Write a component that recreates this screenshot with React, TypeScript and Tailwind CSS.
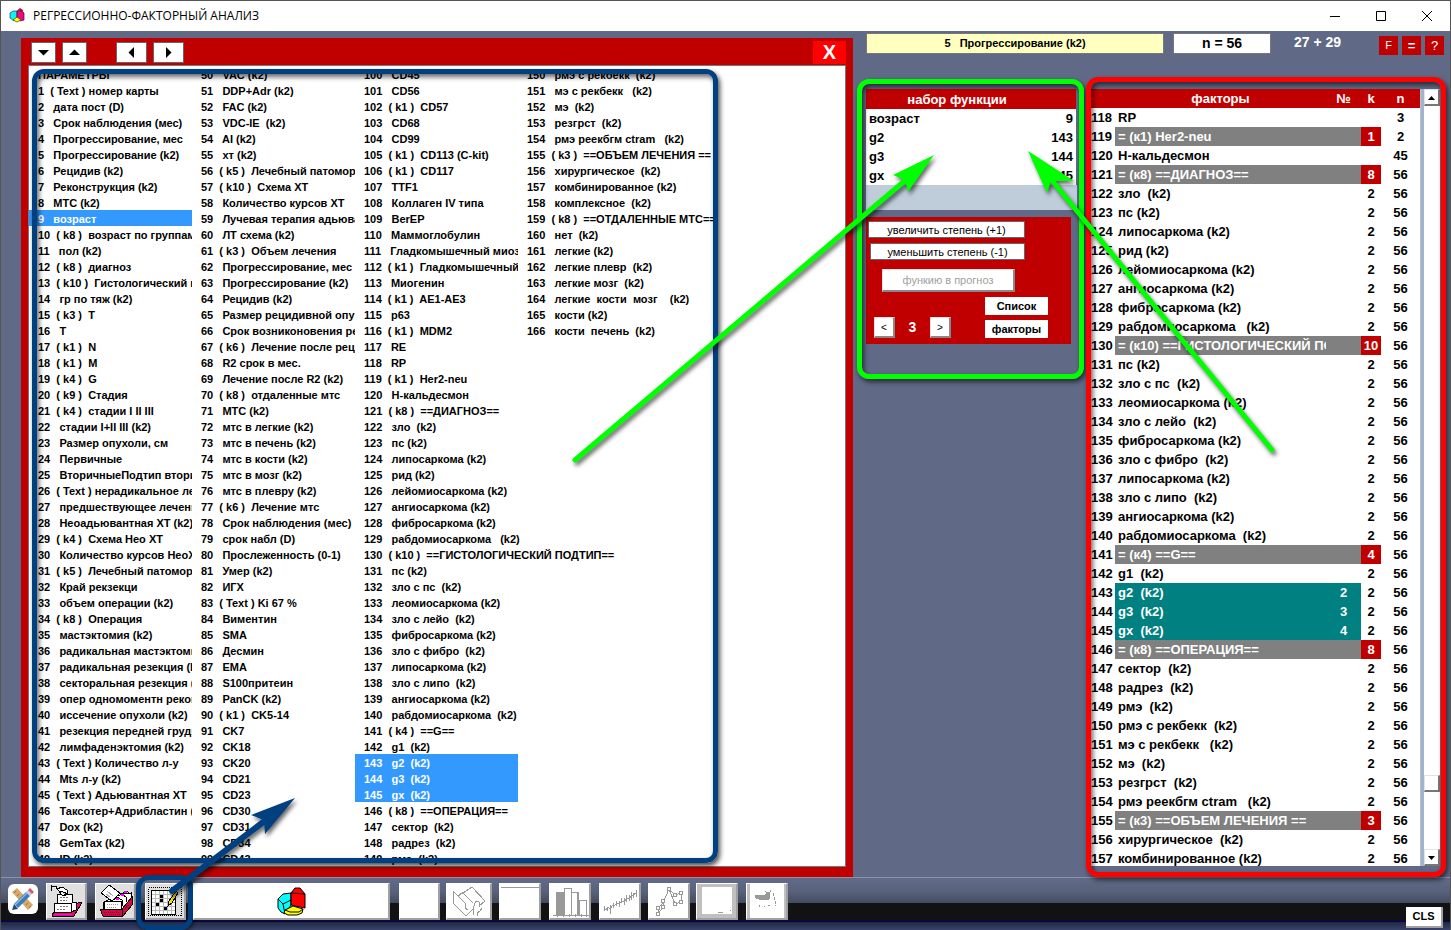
import React from "react";

const PARAMETERS: string[] = [
  "ПАРАМЕТРЫ",
  "( Text ) номер карты", "дата пост (D)", "Срок наблюдения (мес)", "Прогрессирование, мес", "Прогрессирование (k2)",
  "Рецидив (k2)", "Реконструкция (k2)", "МТС (k2)", "возраст", "( k8 )  возраст по группам",
  "пол (k2)", "( k8 )  диагноз", "( k10 )  Гистологический п", "гр по тяж (k2)", "( k3 )  T",
  "T", "( k1 )  N", "( k1 )  M", "( k4 )  G", "( k9 )  Стадия",
  "( k4 )  стадии I II III", "стадии I+II III (k2)", "Размер опухоли, см", "Первичные", "ВторичныеПодтип втори",
  "( Text ) нерадикальное ле", "предшествующее лечени", "Неоадьювантная ХТ (k2)", "( k4 )  Схема Нео ХТ", "Количество курсов НеоХ",
  "( k5 )  Лечебный патомор", "Край рекзекци", "объем операции (k2)", "( k8 )  Операция", "мастэктомия (k2)",
  "радикальная мастэктоми", "радикальная резекция (k", "секторальная резекция (", "опер одномоментн рекон", "иссечение опухоли (k2)",
  "резекция передней грудн", "лимфаденэктомия (k2)", "( Text ) Количество л-у", "Mts л-у (k2)", "( Text ) Адьювантная ХТ",
  "Таксотер+Адрибластин (", "Dox (k2)", "GemTax (k2)", "ID (k2)", "VAC (k2)",
  "DDP+Adr (k2)", "FAC (k2)", "VDC-IE  (k2)", "AI (k2)", "хт (k2)",
  "( k5 )  Лечебный патомор", "( k10 )  Схема ХТ", "Количество курсов ХТ", "Лучевая терапия адьюва", "ЛТ схема (k2)",
  "( k3 )  Объем лечения", "Прогрессирование, мес", "Прогрессирование (k2)", "Рецидив (k2)", "Размер рецидивной опу",
  "Срок возниконовения ре", "( k6 )  Лечение после рец", "R2 срок в мес.", "Лечение после R2 (k2)", "( k8 )  отдаленные мтс",
  "МТС (k2)", "мтс в легкие (k2)", "мтс в печень (k2)", "мтс в кости (k2)", "мтс в мозг (k2)",
  "мтс в плевру (k2)", "( k6 )  Лечение мтс", "Срок наблюдения (мес)", "срок набл (D)", "Прослеженность (0-1)",
  "Умер (k2)", "ИГХ", "( Text ) Ki 67 %", "Виментин", "SMA",
  "Десмин", "EMA", "S100притеин", "PanCK (k2)", "( k1 )  CK5-14",
  "CK7", "CK18", "CK20", "CD21", "CD23",
  "CD30", "CD31", "CD34", "CD43", "CD45",
  "CD56", "( k1 )  CD57", "CD68", "CD99", "( k1 )  CD113 (C-kit)",
  "( k1 )  CD117", "TTF1", "Коллаген IV типа", "BerEP", "Маммоглобулин",
  "Гладкомышечный миоз", "( k1 )  Гладкомышечный", "Миогенин", "( k1 )  AE1-AE3", "p63",
  "( k1 )  MDM2", "RE", "RP", "( k1 )  Her2-neu", "Н-кальдесмон",
  "( k8 )  ==ДИАГНОЗ==", "зло  (k2)", "пс (k2)", "липосаркома (k2)", "рид (k2)",
  "лейомиосаркома (k2)", "ангиосаркома (k2)", "фибросаркома (k2)", "рабдомиосаркома   (k2)", "( k10 )  ==ГИСТОЛОГИЧЕСКИЙ ПОДТИП==",
  "пс (k2)", "зло с пс  (k2)", "леомиосаркома (k2)", "зло с лейо  (k2)", "фибросаркома (k2)",
  "зло с фибро  (k2)", "липосаркома (k2)", "зло с липо  (k2)", "ангиосаркома (k2)", "рабдомиосаркома  (k2)",
  "( k4 )  ==G==", "g1  (k2)", "g2  (k2)", "g3  (k2)", "gx  (k2)",
  "( k8 )  ==ОПЕРАЦИЯ==", "сектор  (k2)", "радрез  (k2)", "рмэ  (k2)", "рмэ с рекбекк  (k2)",
  "мэ с рекбекк   (k2)", "мэ  (k2)", "резгрст  (k2)", "рмэ реекбгм ctram   (k2)", "( k3 )  ==ОБЪЕМ ЛЕЧЕНИЯ ==",
  "хирургическое  (k2)", "комбинированное (k2)", "комплексное  (k2)", "( k8 )  ==ОТДАЛЕННЫЕ МТС==", "нет  (k2)",
  "легкие (k2)", "легкие плевр  (k2)", "легкие мозг  (k2)", "легкие  кости  мозг    (k2)", "кости (k2)",
  "кости  печень  (k2)",
];

const SELECTED = [9, 143, 144, 145];

type Factor = { id: number; name: string; k?: string; n: string; group?: boolean; pick?: string };

const FACTORS: Factor[] = [
  { id: 118, name: "RP", n: "3" },
  { id: 119, name: "= (к1) Her2-neu", k: "1", n: "2", group: true },
  { id: 120, name: "Н-кальдесмон", n: "45" },
  { id: 121, name: "= (к8) ==ДИАГНОЗ==", k: "8", n: "56", group: true },
  { id: 122, name: "зло  (k2)", k: "2", n: "56" },
  { id: 123, name: "пс (k2)", k: "2", n: "56" },
  { id: 124, name: "липосаркома (k2)", k: "2", n: "56" },
  { id: 125, name: "рид (k2)", k: "2", n: "56" },
  { id: 126, name: "лейомиосаркома (k2)", k: "2", n: "56" },
  { id: 127, name: "ангиосаркома (k2)", k: "2", n: "56" },
  { id: 128, name: "фибросаркома (k2)", k: "2", n: "56" },
  { id: 129, name: "рабдомиосаркома   (k2)", k: "2", n: "56" },
  { id: 130, name: "= (к10) ==ГИСТОЛОГИЧЕСКИЙ ПО", k: "10", n: "56", group: true },
  { id: 131, name: "пс (k2)", k: "2", n: "56" },
  { id: 132, name: "зло с пс  (k2)", k: "2", n: "56" },
  { id: 133, name: "леомиосаркома (k2)", k: "2", n: "56" },
  { id: 134, name: "зло с лейо  (k2)", k: "2", n: "56" },
  { id: 135, name: "фибросаркома (k2)", k: "2", n: "56" },
  { id: 136, name: "зло с фибро  (k2)", k: "2", n: "56" },
  { id: 137, name: "липосаркома (k2)", k: "2", n: "56" },
  { id: 138, name: "зло с липо  (k2)", k: "2", n: "56" },
  { id: 139, name: "ангиосаркома (k2)", k: "2", n: "56" },
  { id: 140, name: "рабдомиосаркома  (k2)", k: "2", n: "56" },
  { id: 141, name: "= (к4) ==G==", k: "4", n: "56", group: true },
  { id: 142, name: "g1  (k2)", k: "2", n: "56" },
  { id: 143, name: "g2  (k2)", k: "2", n: "56", pick: "2" },
  { id: 144, name: "g3  (k2)", k: "2", n: "56", pick: "3" },
  { id: 145, name: "gx  (k2)", k: "2", n: "56", pick: "4" },
  { id: 146, name: "= (к8) ==ОПЕРАЦИЯ==", k: "8", n: "56", group: true },
  { id: 147, name: "сектор  (k2)", k: "2", n: "56" },
  { id: 148, name: "радрез  (k2)", k: "2", n: "56" },
  { id: 149, name: "рмэ  (k2)", k: "2", n: "56" },
  { id: 150, name: "рмэ с рекбекк  (k2)", k: "2", n: "56" },
  { id: 151, name: "мэ с рекбекк   (k2)", k: "2", n: "56" },
  { id: 152, name: "мэ  (k2)", k: "2", n: "56" },
  { id: 153, name: "резгрст  (k2)", k: "2", n: "56" },
  { id: 154, name: "рмэ реекбгм ctram   (k2)", k: "2", n: "56" },
  { id: 155, name: "= (к3) ==ОБЪЕМ ЛЕЧЕНИЯ ==", k: "3", n: "56", group: true },
  { id: 156, name: "хирургическое  (k2)", k: "2", n: "56" },
  { id: 157, name: "комбинированное (k2)", k: "2", n: "56" },
];

const FUNCTION_SET = [
  ["возраст", "9"],
  ["g2", "143"],
  ["g3", "144"],
  ["gx", "145"],
];

function parameterText(index: number) {
  const name = PARAMETERS[index];
  if (index === 0) return name;
  return `${index}${name.startsWith("(") ? "  " : "   "}${name}`;
}

function Triangle({ d }: { d: string }) {
  return (
    <svg width="11" height="11" viewBox="0 0 11 11" aria-hidden="true">
      <path d={d} fill="#000" />
    </svg>
  );
}
const DOWN = "M0 3H11L5.5 8.500Z";
const UP = "M0 8H11L5.500 2.500Z";
const LEFT = "M8 0V11L2.500 5.500Z";
const RIGHT = "M3 0V11L8.500 5.500Z";

function Pie({ className }: { className: string }) {
  return (
    <svg className={className} viewBox="0 0 30 30" stroke="#000" strokeWidth="1" aria-hidden="true">
      <path d="M1 12 6 7 14 6V18L8 27 4 25 1 21Z" fill="#0ff" />
      <path d="M1 12 6 17 14 13M6 17 8 27" fill="none" />
      <path d="M14 6 18 1 23 1 28 7V21L23 20 14 18Z" fill="#f00" />
      <path d="M14 6 28 7" fill="none" />
      <path d="M8 23 16 19 26 22 25 26 20 28H11L7 26Z" fill="#ff0" />
      <path d="M8 23 13 25H22L26 22" fill="none" />
    </svg>
  );
}

function WindowLogo() {
  return (
    <svg width="16" height="16" viewBox="0 0 16 16" aria-hidden="true">
      <path d="M1 5 4 3 8 3V10L5 13 1 10Z" fill="#0cf3f7" stroke="#145" strokeWidth=".7" />
      <path d="M8 3 11 1 15 5V12L11 13 8 10Z" fill="#f0087c" stroke="#403" strokeWidth=".7" />
      <path d="M9 2 11 0 14 2V4L11 4Z" fill="#a51b35" />
      <path d="M4 12 8 9 12 12 8 14Z" fill="#ff0" stroke="#442" strokeWidth=".7" />
    </svg>
  );
}

function ParameterPanel() {
  const columns = [0, 50, 100, 150];
  const arrow = "flex h-[21px] items-center justify-center border border-[#666] bg-white";
  return (
    <section aria-label="Параметры" className="mt-[7px] ml-5 flex min-w-0 flex-1 flex-col bg-[#c00000] px-[7px] pb-[10px]">
      <div className="flex h-[27px] items-center pt-[1px] pl-[3px]">
        <button aria-label="Вниз" className={`${arrow} w-[25px]`}><Triangle d={DOWN} /></button>
        <button aria-label="Вверх" className={`${arrow} ml-[6px] w-[25px]`}><Triangle d={UP} /></button>
        <button aria-label="Влево" className={`${arrow} ml-[29px] w-[31px]`}><Triangle d={LEFT} /></button>
        <button aria-label="Вправо" className={`${arrow} ml-[6px] w-[31px]`}><Triangle d={RIGHT} /></button>
        <button className="ml-auto h-[23px] w-[33px] bg-[#ff0000] text-[20px] leading-[23px] font-bold text-white">X</button>
      </div>
      <div className="relative min-h-0 flex-1 border border-[#777] bg-white">
        <div className="flex h-full overflow-hidden text-[11px] leading-[18px] font-bold whitespace-pre text-black">
          {columns.map((start) => (
            <ul key={start} className={start === 150 ? "flex-1" : "w-[163px] shrink-0"}>
              {PARAMETERS.slice(start, start + 50).map((_, i) => {
                const index = start + i;
                const clipped = index + 50 < PARAMETERS.length;
                return (
                  <li
                    key={index}
                    className={`h-4 pl-[9px] ${clipped ? "overflow-hidden" : ""} ${SELECTED.includes(index) ? "bg-[#3399ff] text-white" : ""}`}
                  >
                    {parameterText(index)}
                  </li>
                );
              })}
            </ul>
          ))}
        </div>
        <div className="pointer-events-none absolute top-[3px] bottom-[3px] left-[3px] w-[686px] rounded-[12px] border-[5px] border-[#004080] shadow-[2px_3px_5px_rgba(0,0,0,0.7),inset_2px_3px_5px_rgba(0,0,0,0.6)]" />
      </div>
    </section>
  );
}

function StatusRow() {
  const small = "mt-[3px] h-[19px] w-[19px] bg-[#c00000] leading-[17px] text-white";
  return (
    <div className="flex h-[58px] items-start pt-[2px] pr-[6px] pl-[13px] font-bold">
      <div className="h-[21px] w-[298px] border border-[#777] bg-[#ffffc0] text-center text-[11px] leading-[19px] whitespace-pre text-black">5   Прогрессирование (k2)</div>
      <div className="ml-[9px] h-[21px] w-[98px] border border-[#777] bg-white text-center text-[14px] leading-[18px] text-black">n = 56</div>
      <div className="ml-[23px] text-[14px] leading-[18px] text-white">27 + 29</div>
      <div className="ml-auto flex gap-[4px]">
        <button className={`${small} text-[11px] font-normal`}>F</button>
        <button className={`${small} text-[13px] font-bold`}>=</button>
        <button className={`${small} text-[13px] font-normal`}>?</button>
      </div>
    </div>
  );
}

function FunctionPanel() {
  const wide = "block h-[17px] border border-[#666] bg-white text-center text-[11px] leading-[14px] text-black";
  const raised = "border-t border-r-2 border-b-2 border-l border-t-[#e3e3e3] border-r-[#888] border-b-[#888] border-l-[#e3e3e3] bg-white";
  const step = `${raised} h-[21px] w-[21px] text-[10px] leading-[17px] text-black`;
  const plain = "h-[18px] w-[63px] bg-white text-[11px] leading-[16px] font-bold text-black";
  return (
    <section className="relative h-[286px] w-[212px] shrink-0">
      <table className="w-[210px] table-fixed border-collapse bg-white text-[13px] leading-[19px] font-bold text-black">
        <thead>
          <tr className="h-5 bg-[#c00000] text-white">
            <th colSpan={2} className="p-0 pr-[28px]">набор функции</th>
          </tr>
        </thead>
        <tbody>
          {FUNCTION_SET.map(([name, id]) => (
            <tr key={name} className="h-[19px]">
              <td className="p-0 pl-[3px]">{name}</td>
              <td className="p-0 pr-[3px] text-right">{id}</td>
            </tr>
          ))}
        </tbody>
      </table>
      <div className="h-[25px] w-[211px] bg-[#bfcddb]" />
      <div className="mt-[7px] h-[127px] w-[205px] bg-[#c00000] pt-1 pl-[2px]">
        <button className={`${wide} w-[157px]`}>увеличить степень (+1)</button>
        <button className={`${wide} mt-[5px] ml-[2px] w-[155px]`}>уменьшить степень (-1)</button>
        <button disabled className={`${raised} mt-[9px] ml-[14px] block h-[23px] w-[133px] text-[11px] leading-[19px] text-[#a0a0a0]`}>функию в прогноз</button>
        <div className="mt-[5px] flex items-end pl-[6px]">
          <button aria-label="Предыдущая" className={step}>&lt;</button>
          <span className="w-[35px] text-center text-[14px] leading-[22px] font-bold text-white">3</span>
          <button aria-label="Следующая" className={step}>&gt;</button>
          <div className="ml-[34px] flex flex-col gap-[5px]">
            <button className={plain}>Список</button>
            <button className={plain}>факторы</button>
          </div>
        </div>
      </div>
      <div className="pointer-events-none absolute -top-[10px] -left-[9px] h-[300px] w-[227px] rounded-[12px] border-[5px] border-[#00ff00] shadow-[2px_3px_5px_rgba(0,0,0,0.6),inset_2px_3px_5px_rgba(0,0,0,0.6)]" />
    </section>
  );
}

function FactorPanel() {
  const bar = "h-[17px] w-4 border-t border-r-2 border-b-2 border-l border-t-[#e3e3e3] border-r-[#777] border-b-[#777] border-l-[#e3e3e3] bg-white flex items-center justify-center";
  return (
    <section className="relative mr-[10px] min-w-0 flex-1">
      <div className="flex h-full overflow-hidden bg-white">
        <div className="min-w-0 flex-1">
          <table className="w-full table-fixed border-collapse text-[13px] leading-[19px] font-bold text-black">
            <colgroup>
              <col className="w-6" />
              <col />
              <col className="w-[35px]" />
              <col className="w-5" />
              <col className="w-[39px]" />
            </colgroup>
            <thead>
              <tr className="h-[19px] bg-[#c00000] text-white">
                <th className="p-0" />
                <th className="p-0">факторы</th>
                <th className="p-0">№</th>
                <th className="p-0">k</th>
                <th className="p-0">n</th>
              </tr>
            </thead>
            <tbody>
              {FACTORS.map((f) => {
                const tone = f.group ? "bg-[#808080] text-white" : f.pick ? "bg-[#008080] text-white" : "";
                return (
                  <tr key={f.id} className="h-[19px]">
                    <td className="p-0">{f.id}</td>
                    <td className={`overflow-hidden p-0 pl-[3px] whitespace-pre ${tone}`}>{f.name}</td>
                    <td className={`p-0 text-center ${tone}`}>{f.pick}</td>
                    <td className={`p-0 text-center ${f.group ? "bg-[#c00000] text-white" : ""}`}>{f.k}</td>
                    <td className="p-0 text-center">{f.n}</td>
                  </tr>
                );
              })}
            </tbody>
          </table>
        </div>
        <div className="w-[4px] border-l border-[#c0c0c0] bg-[#9fb4d0]" />
        <div className="flex w-4 flex-col">
          <button aria-label="Прокрутить вверх" className={bar}><Triangle d="M2 8H9L5.500 4Z" /></button>
          <div className="flex-1" />
          <div className={bar} />
          <div className="h-[57px]" />
          <button aria-label="Прокрутить вниз" className={bar}><Triangle d="M2 4H9L5.500 8Z" /></button>
        </div>
      </div>
      <div className="pointer-events-none absolute -top-[12px] -right-[6px] -bottom-[11px] -left-[5px] rounded-[12px] border-[5px] border-[#ff0000] shadow-[2px_3px_5px_rgba(0,0,0,0.6),inset_2px_3px_5px_rgba(0,0,0,0.6)]" />
    </section>
  );
}

function Icon({ children, w = 41 }: { children?: React.ReactNode; w?: number }) {
  return (
    <svg width={w} height="37" viewBox={`0 0 ${w} 37`} shapeRendering="crispEdges" fill="none" stroke="#999" strokeWidth="1" aria-hidden="true">
      {children}
    </svg>
  );
}

function Tool({ label, className, children }: { label: string; className: string; children: React.ReactNode }) {
  return (
    <button aria-label={label} className={`relative h-[37px] shrink-0 ${className}`}>
      <span className="block h-full overflow-hidden">{children}</span>
      <span className="pointer-events-none absolute inset-0 border-t border-r-2 border-b-2 border-l border-t-white border-r-[#a0a0a0] border-b-[#a0a0a0] border-l-white" />
    </button>
  );
}

function BottomBar() {
  return (
    <footer className="flex h-[53px] shrink-0 items-start border-t border-[#8b93ac] bg-[linear-gradient(to_bottom,#616b88_0px,#58617a_14px,#434b5f_25px,#121214_25px,#121214_42px,#08083c_42px,#08083c_44px,#202844_44px,#39446c_52px)] pt-[5px] pr-[7px] pl-[7px]">
      <button aria-label="Правка" className="mt-[1px] h-[30px] w-[30px] rounded-[6px] bg-white">
        <svg width="30" height="30" viewBox="0 0 30 30" aria-hidden="true">
          <path d="M4 8 9 4 25 21 20 26Z" fill="#d9a866" />
          <path d="M6 9l2-2M9 12l2-2M18 21l2-2M21 24l2-2" stroke="#a37338" strokeWidth="1" />
          <path d="M4 26 6 20 10 25Z" fill="#224b78" />
          <path d="M6 20 18 8 22 12 10 24Z" fill="#3a7cbc" />
          <path d="M7 21 19 9" stroke="#83b7e4" strokeWidth="1.500" />
          <path d="M18 8 20 6 24 10 22 12Z" fill="#c9ced6" />
          <path d="M20 6 22 4 26 8 24 10Z" fill="#d5566d" />
        </svg>
      </button>
      <Tool label="Карточка" className="ml-2 w-[41px] bg-[#e0e0e0]">
        <Icon>
          <g stroke="#000">
            <path d="M6 31 9 29H25L33 19H35V21L28 33H6Z" fill="#e0105a" />
            <path d="M32 21 27 30M8 31H26" stroke="#f0f" />
            <path d="M11 11H26V19H30V27L25 29V20H11Z" fill="#fff" />
            <path d="M8 20H25V29H8Z" fill="#fff" />
            <path d="M14 14h9M14 17h7M11 26h8M14 23h8" stroke="#777" strokeDasharray="2 1" />
            <path d="M5.500 2V8M5 3.500H10L11 6 16 4 21 7 22 11 17 9 13 8 10 5M12 7 16 12 20 13" fill="#fff" />
          </g>
        </Icon>
      </Tool>
      <Tool label="Картотека" className="ml-2 w-[41px] bg-[#e0e0e0]">
        <Icon>
          <g stroke="#000">
            <path d="M9 19 24 11 36 10V16L27 27H8Z" fill="#fff" />
            <path d="M14 2 25 10 17 18 6 10Z" fill="#fff" />
            <path d="M12 8l6 5M11 11l4 3" stroke="#aaa" />
            <path d="M9 18H26V26H9Z" fill="#fff" />
            <path d="M12 21h11M12 24h9" stroke="#999" strokeDasharray="1 1" />
            <path d="M19 17 22 14 27 17 28 23M23 13 27 11 31 14V19M28 10 31 8 36 11V14" />
            <path d="M5 26H27L37 14V22L28 33H8Z" fill="#d00a45" />
            <path d="M5 26H27V33M27 26 37 14" />
            <path d="M21 16h3M26 12h3M29 9h3" stroke="#f0f" strokeWidth="2" />
            <path d="M9 29h16M10 31h16M30 26l5-6" stroke="#7d0030" strokeDasharray="1 1" />
          </g>
        </Icon>
      </Tool>
      <div className="relative ml-[9px] h-[37px]">
        <Tool label="Таблица параметров" className="w-[41px] bg-[#e0e0e0]">
          <Icon>
            <rect x="3.500" y="4.500" width="33" height="28" stroke="#000" strokeDasharray="1 1" />
            <rect x="6.500" y="7.500" width="24" height="24" fill="#fff" stroke="#000" />
            <path d="M10.500 8V31M14.500 8V31M18.500 8V31M22.500 8V31M26.500 8V31M7 11.500H30M7 15.500H30M7 19.500H30M7 23.500H30M7 27.500H30" stroke="#bbb" />
            <path d="M15 12h3v3h-3zM15 16h3v3h-3zM11 20h3v3h-3zM19 24h3v3h-3z" fill="#000" stroke="none" />
            <path d="M31 8 24 18 23 23 27 20 33 10Z" fill="#ffe000" stroke="#000" />
          </Icon>
        </Tool>
        <div className="pointer-events-none absolute -top-2 -left-[9px] h-[55px] w-[57px] rounded-[13px] border-[5px] border-[#004080] shadow-[1px_2px_4px_rgba(0,0,0,0.6)]" />
      </div>
      <Tool label="Диаграмма" className="ml-[7px] w-[197px] bg-white">
        <span className="flex h-full items-center justify-center"><Pie className="h-[30px] w-[30px]" /></span>
      </Tool>
      <Tool label="Пустая" className="ml-[9px] w-[41px] bg-white"><Icon /></Tool>
      <Tool label="Выбор карты" className="ml-[6px] w-[46px] bg-white">
        <Icon w={46}>
          <path d="M7 8V20L19 32H21L28 25M7 8 12 13 17 9M12 13 20 21 19 25 22 27M12 13 18 9M17 10 26 4 39 18 33 23M17 10 27 20M27 32V25L30 18 33 19V24M36 25 34 28 31 30V33" />
        </Icon>
      </Tool>
      <Tool label="Окно" className="ml-[7px] w-[42px] bg-white"><Icon><path d="M2 4.500H41" /></Icon></Tool>
      <Tool label="Гистограмма" className="ml-[8px] w-[42px] bg-white">
        <Icon>
          <path d="M7 9H15V32H7Z" fill="#999" />
          <path d="M15.500 5.500H22.500V32M22.500 9.500H29.500V32M30 17.500H37.500V32M15.500 5V32" strokeWidth="1" />
          <path d="M28 9v23M30 17v15M4 32.500H41M8 31v3M14 31v3M20 31v3M26 31v3M32 31v3M37 31v3" />
        </Icon>
      </Tool>
      <Tool label="Временной ряд" className="ml-[8px] w-[42px] bg-white">
        <Icon>
          <path d="M5 25 7 27 9 24 11 26 13 23 16 22 18 20 20 21 23 18 25 19 27 16 30 15 33 13 37 10" />
          <path d="M5.500 23V28M8.500 24V28M11.500 22V31M14.500 20V25M17.500 18V23M20.500 18V24M22.500 15V20M25.500 15V22M27.500 12V19M30.500 12V18M32.500 9V17M34.500 10V15M37.500 7V14" />
        </Icon>
      </Tool>
      <Tool label="Граф" className="ml-[7px] w-[42px] bg-white">
        <Icon>
          <path d="M10 31 10 25 15 20 21 6 27 12 33 10V19L27 21 21 6M10 31 15 24V18" />
          {[[10, 31], [10, 25], [15, 24], [15, 18], [21, 6], [27, 12], [33, 10], [33, 19], [27, 21]].map(([x, y]) => (
            <rect key={`${x}-${y}`} x={x - 1.5} y={y - 1.5} width="3" height="3" fill="#fff" />
          ))}
        </Icon>
      </Tool>
      <Tool label="Экран" className="ml-[6px] w-[42px] bg-[#c0c0c0]">
        <Icon><path d="M6 4H36V31H6Z" fill="#fff" stroke="none" /><path d="M22 29.500h5M34 27.500h1" /></Icon>
      </Tool>
      <Tool label="Рисунок" className="ml-[8px] w-[42px] bg-white">
        <Icon>
          <path d="M2.500 0V37M39.500 0V37" stroke="#c0c0c0" strokeWidth="3" />
          <path d="M9 13 14 12 18 13 22 9 24 12 23 16 17 17 10 15Z" fill="#999" />
          <path d="M19 8l2 2M25 7l-2 4M27 10l2 7v6M13 22v2M18 23h1M22 22h2" strokeDasharray="3 1" />
        </Icon>
      </Tool>
      <button className="mt-[24px] ml-auto h-[21px] w-[37px] border-r-2 border-b-2 border-[#a0a0a0] bg-white text-[11px] leading-[19px] font-bold text-black">CLS</button>
    </footer>
  );
}

function Arrows() {
  return (
    <svg viewBox="0 0 1451 930" preserveAspectRatio="xMidYMin meet" className="pointer-events-none absolute -inset-px h-[calc(100%+2px)] w-[calc(100%+2px)] drop-shadow-[2px_3px_2px_rgba(0,0,0,0.6)]" aria-hidden="true">
      <g stroke="#00ff00" strokeWidth="5" strokeLinecap="round">
        <path d="M575 460 908 178" />
        <path d="M1272 450 1050 178" />
      </g>
      <path d="M934 155 893 175 905 180 908 192Z" fill="#00ff00" />
      <path d="M1028 151 1047 193 1051 181 1074 181Z" fill="#00ff00" />
      <path d="M172 891 266 820" stroke="#004080" strokeWidth="6" strokeLinecap="round" />
      <path d="M295 798 251 815 264 820 265 834Z" fill="#004080" />
    </svg>
  );
}

export default function App() {
  return (
    <div className="relative flex h-screen flex-col overflow-hidden border-x border-t border-[#555] bg-[#606986] font-['Liberation_Sans',Arial,sans-serif]">
      <header className="flex h-[30px] shrink-0 items-center bg-white pl-2 text-black">
        <WindowLogo />
        <h1 className="ml-2 font-['Open_Sans','Noto_Sans',sans-serif] text-[12px] leading-4">РЕГРЕССИОННО-ФАКТОРНЫЙ АНАЛИЗ</h1>
        <div className="ml-auto flex">
          {["M1 6.500H11", "M1.500 1.500H10.500V10.500H1.500Z", "M1 1 11 11M11 1 1 11"].map((d, i) => (
            <button key={d} aria-label={["Свернуть", "Развернуть", "Закрыть"][i]} className="flex h-[30px] w-[46px] items-center justify-center">
              <svg width="12" height="12" viewBox="0 0 12 12" fill="none" stroke="#000" strokeWidth="1"><path d={d} /></svg>
            </button>
          ))}
        </div>
      </header>
      <main className="flex min-h-0 flex-1">
        <ParameterPanel />
        <aside className="flex w-[597px] shrink-0 flex-col pb-[11px]">
          <StatusRow />
          <div className="flex min-h-0 flex-1 gap-[13px] pl-[13px]">
            <FunctionPanel />
            <FactorPanel />
          </div>
        </aside>
      </main>
      <BottomBar />
      <Arrows />
    </div>
  );
}
